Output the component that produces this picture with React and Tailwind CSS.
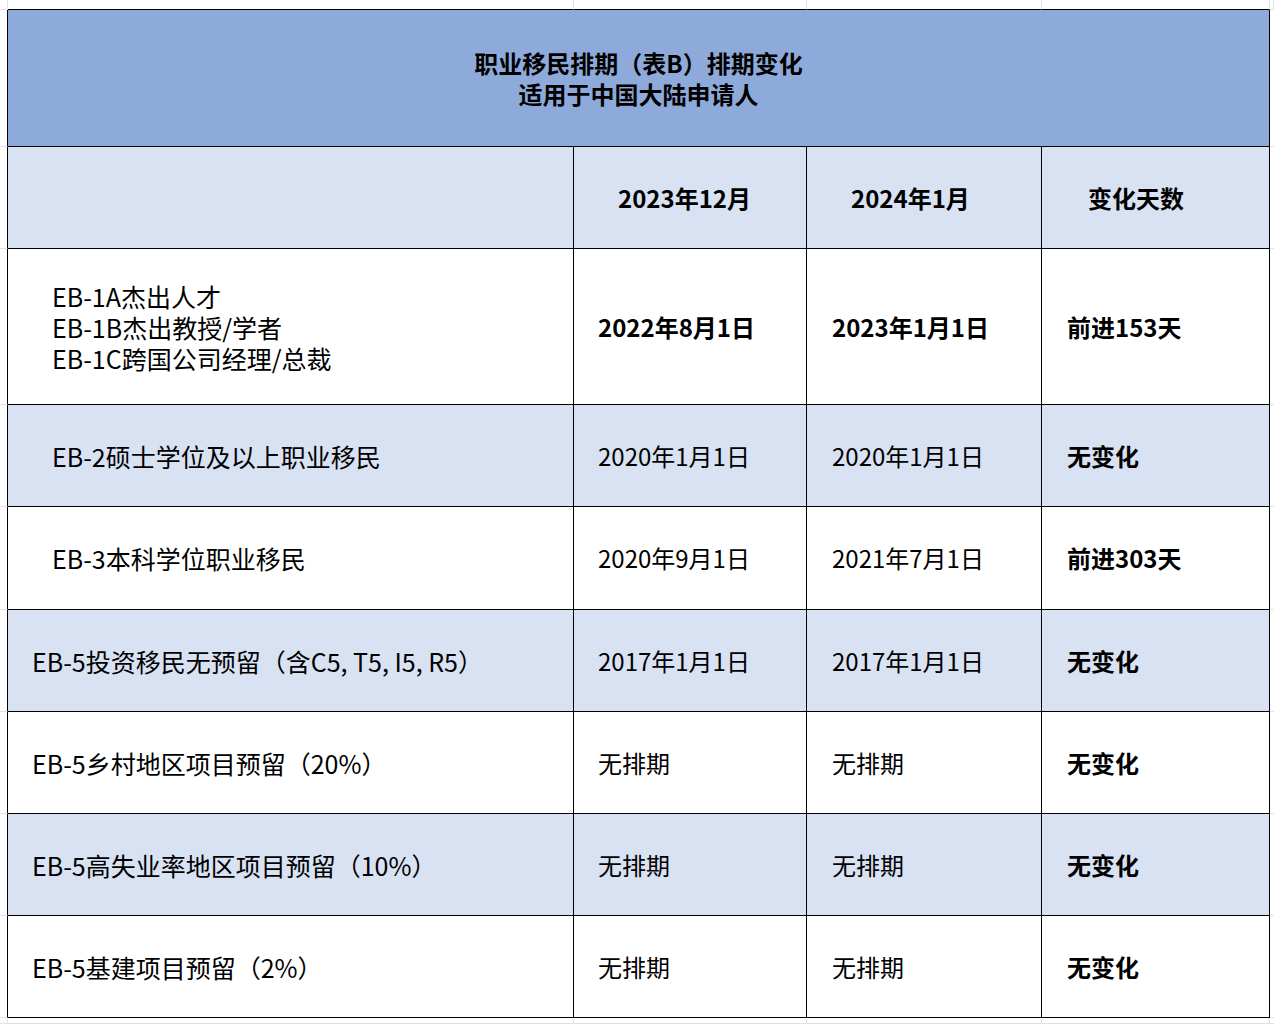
import React from "react";

const GRID = "border-[#e1e1e1]";

const rows = [
  {
    label: ["EB-1A杰出人才", "EB-1B杰出教授/学者", "EB-1C跨国公司经理/总裁"],
    indent: "pl-[44px]",
    dec: "2022年8月1日",
    jan: "2023年1月1日",
    change: "前进153天",
    boldDates: true,
    shade: false,
  },
  {
    label: ["EB-2硕士学位及以上职业移民"],
    indent: "pl-[44px]",
    dec: "2020年1月1日",
    jan: "2020年1月1日",
    change: "无变化",
    shade: true,
  },
  {
    label: ["EB-3本科学位职业移民"],
    indent: "pl-[44px]",
    dec: "2020年9月1日",
    jan: "2021年7月1日",
    change: "前进303天",
    shade: false,
  },
  {
    label: ["EB-5投资移民无预留（含C5, T5, I5, R5）"],
    indent: "pl-[24px]",
    dec: "2017年1月1日",
    jan: "2017年1月1日",
    change: "无变化",
    shade: true,
  },
  {
    label: ["EB-5乡村地区项目预留（20%）"],
    indent: "pl-[24px]",
    dec: "无排期",
    jan: "无排期",
    change: "无变化",
    shade: false,
  },
  {
    label: ["EB-5高失业率地区项目预留（10%）"],
    indent: "pl-[24px]",
    dec: "无排期",
    jan: "无排期",
    change: "无变化",
    shade: true,
  },
  {
    label: ["EB-5基建项目预留（2%）"],
    indent: "pl-[24px]",
    dec: "无排期",
    jan: "无排期",
    change: "无变化",
    shade: false,
  },
];

function Margin({ className = "" }) {
  return <div className={`bg-white border-r border-b ${className}`}></div>;
}

function Cell({ bg, className = "", children }) {
  return (
    <div
      className={`flex items-center border-r border-b border-black ${bg} ${className}`}
    >
      {children}
    </div>
  );
}

export default function App() {
  return (
    <div className="w-[1274px] h-[1024px] overflow-hidden bg-white text-black font-['Noto_Sans_CJK_SC','Noto_Sans',sans-serif]">
      <div className="grid h-full grid-cols-[8px_566px_233px_235px_228px_1fr] grid-rows-[10px_137px_102px_156px_102px_103px_102px_102px_102px_102px_1fr]">
        {/* top strip of spreadsheet gridlines */}
        <Margin className={GRID} />
        <Margin className="border-r-[#e1e1e1] border-b-black" />
        <Margin className="border-r-[#e1e1e1] border-b-black" />
        <Margin className="border-r-[#e1e1e1] border-b-black" />
        <Margin className="border-r-[#e1e1e1] border-b-black" />
        <Margin className={GRID} />

        {/* title */}
        <Margin className="border-r-black border-b-[#e1e1e1]" />
        <Cell bg="bg-[#8eaadb]" className="col-span-4 justify-center">
          <div className="flex flex-col gap-[5px] text-center text-[24px] leading-[26px] font-bold">
            <div>职业移民排期（表B）排期变化</div>
            <div>适用于中国大陆申请人</div>
          </div>
        </Cell>
        <Margin className={`border-r-0 ${GRID}`} />

        {/* column headers */}
        <Margin className="border-r-black border-b-[#e1e1e1]" />
        <Cell bg="bg-[#d9e2f3]" />
        <Cell bg="bg-[#d9e2f3]" className="pl-[44px] text-[24px] font-bold">
          2023年12月
        </Cell>
        <Cell bg="bg-[#d9e2f3]" className="pl-[44px] text-[24px] font-bold">
          2024年1月
        </Cell>
        <Cell bg="bg-[#d9e2f3]" className="pl-[46px] text-[24px] font-bold">
          变化天数
        </Cell>
        <Margin className={`border-r-0 ${GRID}`} />

        {rows.map((r, i) => {
          const bg = r.shade ? "bg-[#d9e2f3]" : "bg-white";
          return (
            <React.Fragment key={i}>
              <Margin className="border-r-black border-b-[#e1e1e1]" />
              <Cell bg={bg} className={`${r.indent} text-[25px]`}>
                <div className="flex flex-col gap-[5px] leading-[26px]">
                  {r.label.map((l) => (
                    <div key={l}>{l}</div>
                  ))}
                </div>
              </Cell>
              <Cell
                bg={bg}
                className={`pl-[24px] text-[24px] ${r.boldDates ? "font-semibold" : ""}`}
              >
                {r.dec}
              </Cell>
              <Cell
                bg={bg}
                className={`pl-[25px] text-[24px] ${r.boldDates ? "font-semibold" : ""}`}
              >
                {r.jan}
              </Cell>
              <Cell bg={bg} className="pl-[25px] text-[24px] font-bold">
                {r.change}
              </Cell>
              <Margin className={`border-r-0 ${GRID}`} />
            </React.Fragment>
          );
        })}

        {/* bottom strip */}
        <Margin className={GRID} />
        <Margin className={GRID} />
        <Margin className={GRID} />
        <Margin className={GRID} />
        <Margin className={GRID} />
        <Margin className={`border-r-0 ${GRID}`} />
      </div>
    </div>
  );
}
